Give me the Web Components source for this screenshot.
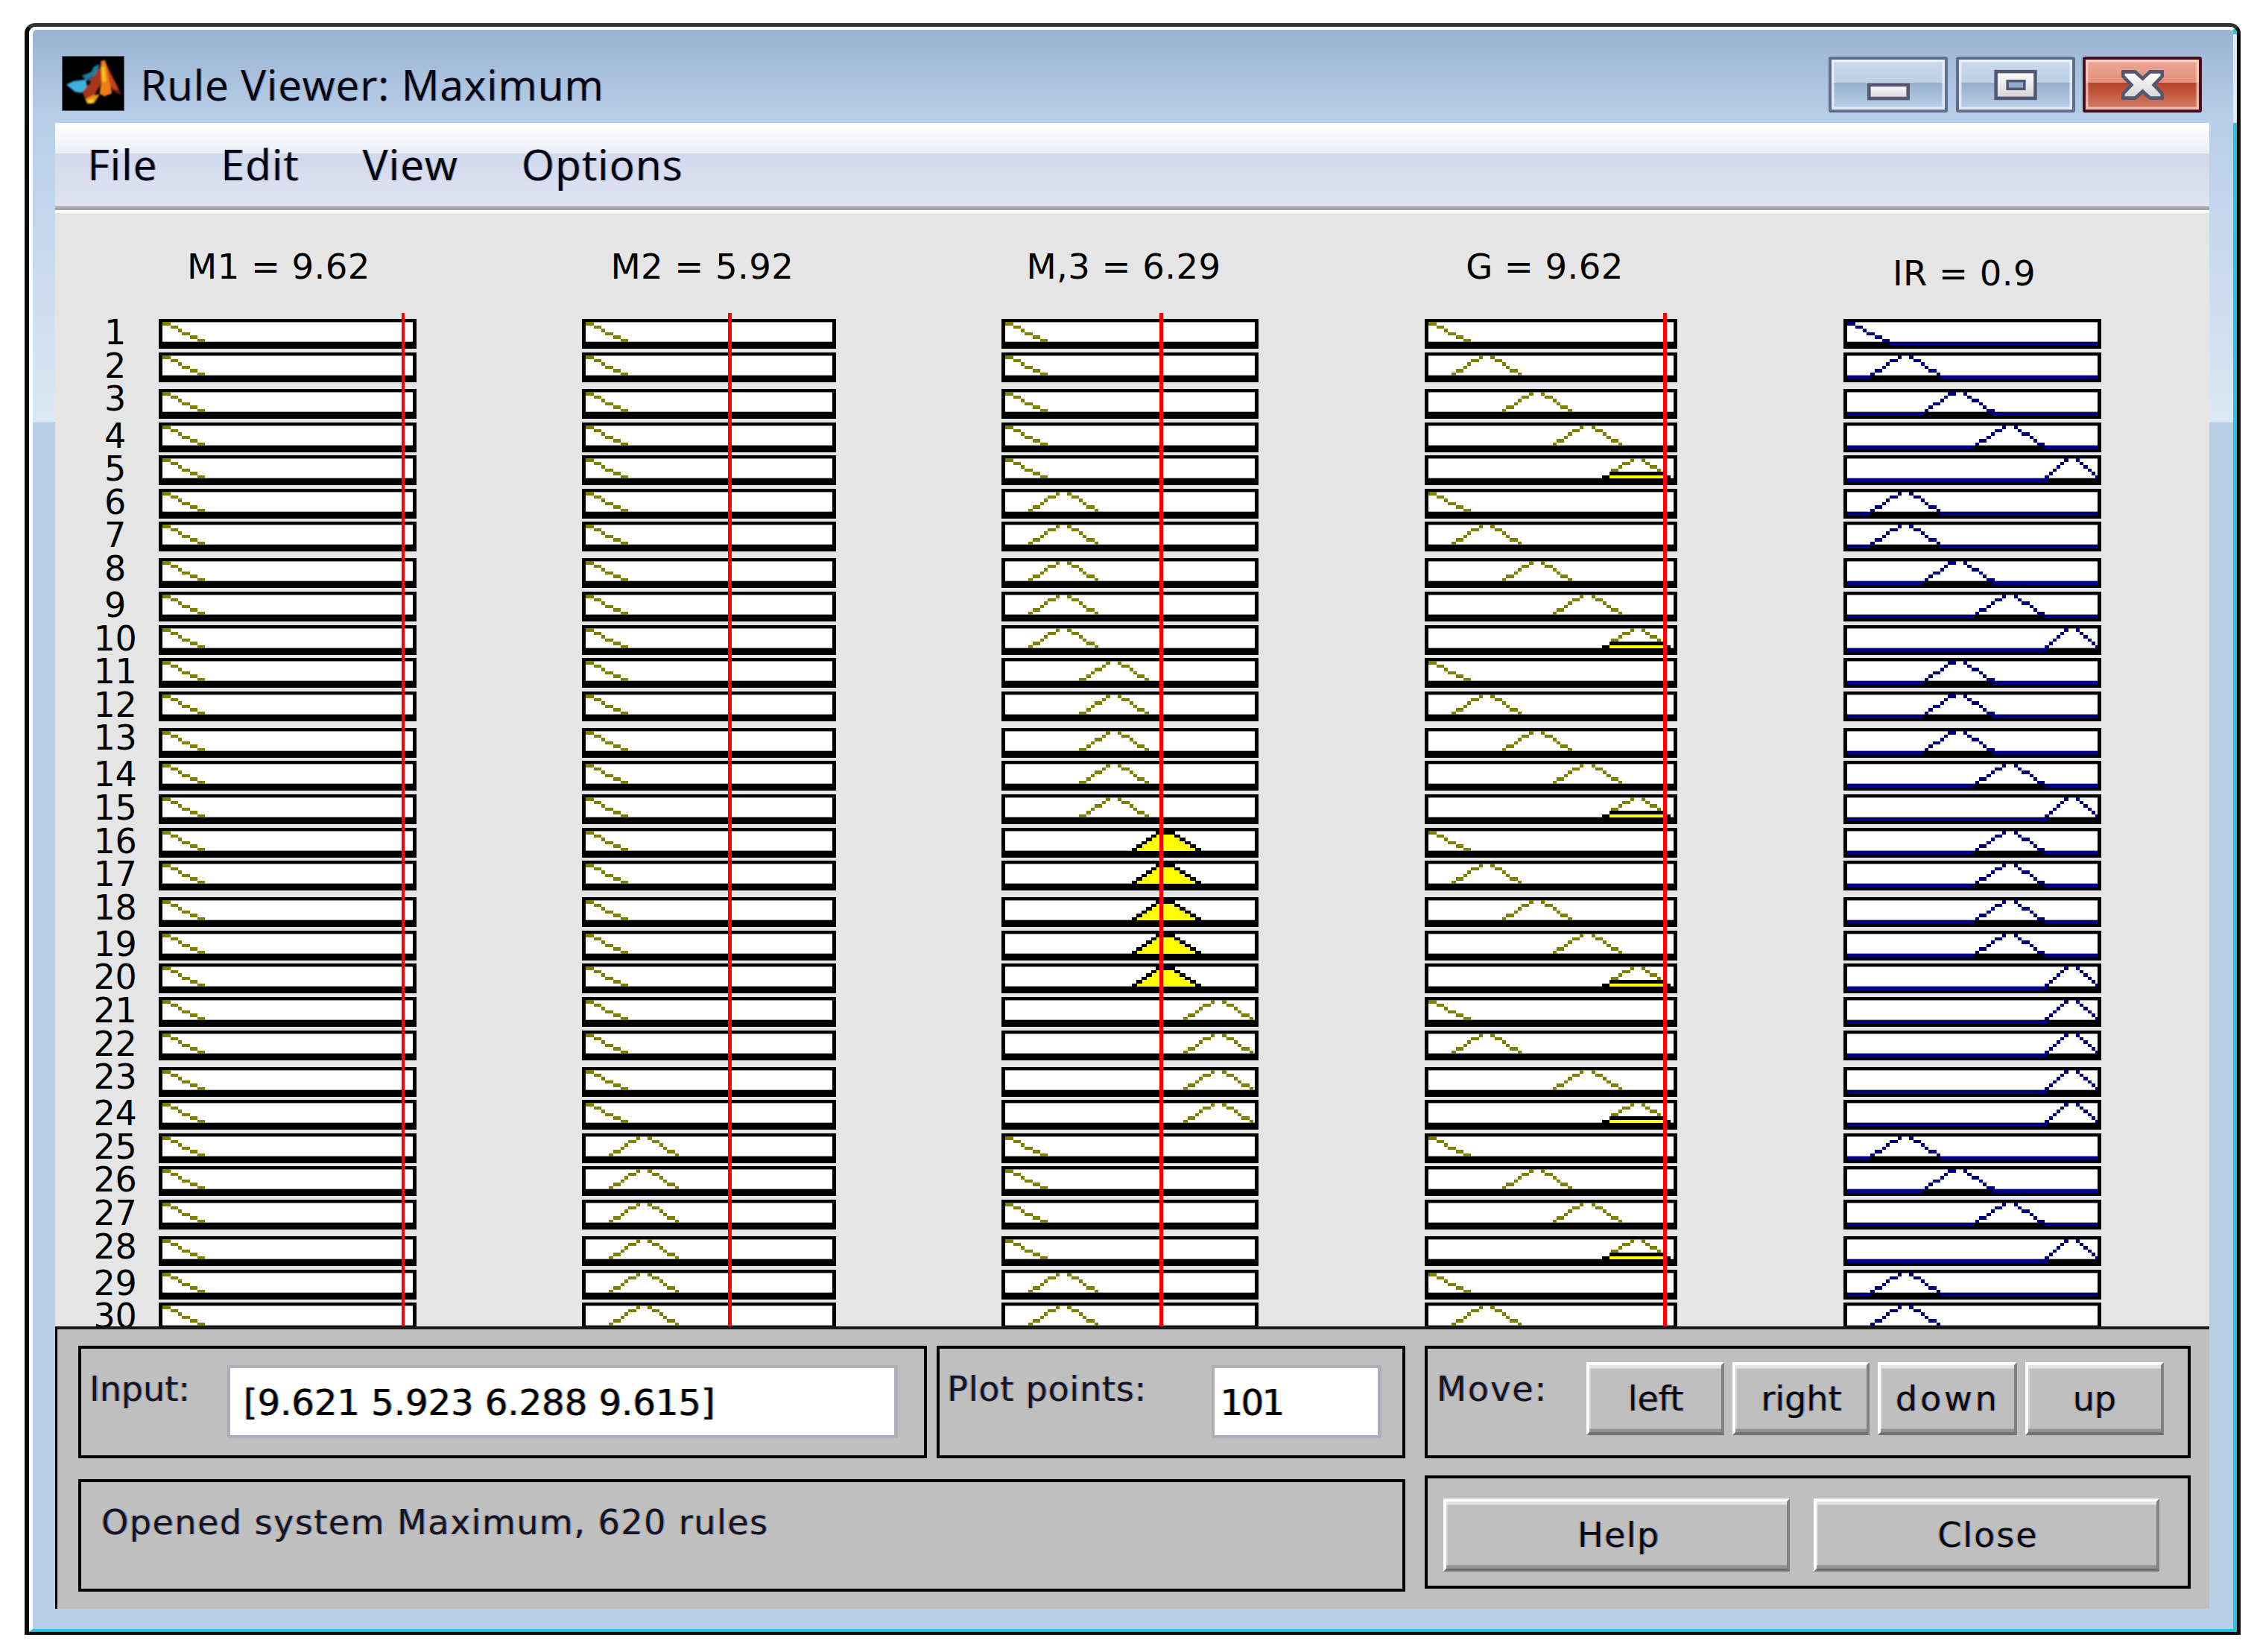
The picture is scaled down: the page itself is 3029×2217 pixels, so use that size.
<!DOCTYPE html>
<html lang="en">
<head>
<meta charset="utf-8">
<title>Rule Viewer: Maximum</title>
<style>
html,body{margin:0;padding:0;background:#fff;width:3029px;height:2217px;overflow:hidden}
body{font-family:"DejaVu Sans",sans-serif;color:#000}
</style>
</head>
<body>
<rv-window>
  <rv-titlebar slot="title" heading="Rule Viewer: Maximum"></rv-titlebar>
  <rv-menubar slot="menu"><span>File</span><span>Edit</span><span>View</span><span>Options</span></rv-menubar>
  <rv-plots slot="plots"></rv-plots>
  <rv-panel slot="panel">
    <rv-frame style="grid-column:1;grid-row:1" pad="22px 0 0 11.5px" gap="50px">
      <rv-label>Input:</rv-label>
      <rv-edit style="width:900.5px;padding-left:18px">[9.621 5.923 6.288 9.615]</rv-edit>
    </rv-frame>
    <rv-frame style="grid-column:3;grid-row:1" pad="22px 0 0 10.5px" gap="87.6px">
      <rv-label style="letter-spacing:.8px">Plot points:</rv-label>
      <rv-edit style="width:228px;padding-left:7px;letter-spacing:-2.5px">101</rv-edit>
    </rv-frame>
    <rv-frame style="grid-column:5;grid-row:1" pad="17.5px 0 0 12.5px" gap="52.5px">
      <rv-label style="margin-top:13.6px;letter-spacing:2px">Move:</rv-label>
      <div style="display:flex;gap:11px">
        <rv-button style="width:185px;height:98.7px">left</rv-button>
        <rv-button style="width:184px;height:98.7px">right</rv-button>
        <rv-button style="width:186.6px;height:98.7px;letter-spacing:4px">down</rv-button>
        <rv-button style="width:185.6px;height:98.7px">up</rv-button>
      </div>
    </rv-frame>
    <rv-frame style="grid-column:1 / 4;grid-row:2" pad="31px 0 0 27.5px">
      <rv-label flat style="letter-spacing:1.5px">Opened system Maximum, 620 rules</rv-label>
    </rv-frame>
    <rv-frame style="grid-column:5;grid-row:2;margin-top:-4.5px;height:151.7px" pad="26.5px 0 0 21px" gap="31.5px">
      <rv-button style="width:465.5px;height:98px;letter-spacing:1.5px;padding-left:6px">Help</rv-button>
      <rv-button style="width:464.5px;height:98px;letter-spacing:2px;padding-left:4px">Close</rv-button>
    </rv-frame>
  </rv-panel>
</rv-window>
<script>
const FRINGE='-1.3px 0 rgba(225,135,20,.6),1.3px 0 rgba(10,110,225,.6)';
function shadow(el,html){const r=el.attachShadow({mode:'open'});r.innerHTML=html;return r;}

class RvWindow extends HTMLElement{constructor(){super();shadow(this,`<style>
:host{display:block;box-sizing:border-box;margin:31px 22px 0 33px;height:2162.6px;filter:blur(.7px);
 border:solid #0a0a0a;border-width:5.4px 5px 4px 6.5px;border-top-color:#333;border-radius:14px 14px 0 0}
.inner{position:relative;box-sizing:border-box;height:100%;display:flex;flex-direction:column;padding:0 32px 27px 30px;
 border:solid #fff;border-width:4px 5px 4.5px 5px;border-right-color:#26c4e0;border-bottom-color:#26c4e0;border-radius:9px 9px 0 0;
 background:linear-gradient(#9ab3d1 0,#b8cfe9 125px,#dbe7f5 522px,#dbe7f5 526px,#b9cfe8 527px) padding-box}
.inner::after{content:"";position:absolute;top:6px;right:-5px;width:5px;height:119px;background:#dfeaf4}
::slotted(rv-plots){flex:1 1 0;min-height:0}
</style><div class="inner"><slot name="title"></slot><slot name="menu"></slot><slot name="plots"></slot><slot name="panel"></slot></div>`);}}

class MatlabLogo extends HTMLElement{constructor(){super();shadow(this,`<style>:host{display:block;width:82px;height:71.5px;background:#000;flex:none;outline:1px solid #4d5f78}svg{display:block;width:100%;height:100%}</style>
<svg viewBox="0 0 248 214" aria-hidden="true"><defs><filter id="b"><feGaussianBlur stdDeviation="3"/></filter></defs><g filter="url(#b)">
<polygon points="15,112 45,98 95,92 100,125 75,146 50,142" fill="#3fb1dc"/>
<polygon points="78,76 115,62 128,38 150,30 140,70 98,98" fill="#1e7d96"/>
<polygon points="98,92 132,72 140,76 122,104" fill="#45505e"/>
<polygon points="80,142 110,108 138,62 155,40 158,14 172,12 168,60 150,120 120,170 92,172" fill="#a8361a"/>
<polygon points="155,20 172,14 190,70 200,148 170,160 150,150 158,90" fill="#ee7d18"/>
<polygon points="156,40 172,40 176,100 160,100" fill="#fbc01f"/>
<polygon points="176,24 192,60 218,110 232,142 205,135 190,100" fill="#c93f16"/>
<polygon points="205,132 232,135 238,155 220,148" fill="#6a1f0a"/>
<polygon points="92,172 125,155 150,152 128,188 100,190" fill="#e8951b"/>
<polygon points="104,174 126,172 120,188 108,188" fill="#fde02c"/>
</g></svg>`);}}

class WinButton extends HTMLElement{constructor(){super();
 const k=this.getAttribute('kind');
 const close=k==='close';
 const glyph={min:'<rect x="50" y="33.5" width="52" height="18" fill="url(#g)" stroke="#535872" stroke-width="4.5"/>',
  max:'<rect x="49.3" y="15.7" width="52.5" height="35.6" fill="url(#g)" stroke="#535872" stroke-width="4.5"/><rect x="64.7" y="28.2" width="22.6" height="10.6" fill="#8eadd0" stroke="#535872" stroke-width="3.5"/>',
  close:'<polygon points="50,16 66,16 76,25 86,16 102,16 102,22 91,33.5 102,45 102,51 86,51 76,42 66,51 50,51 50,45 61,33.5 50,22" fill="url(#g)" stroke="#535872" stroke-width="4.5"/>'}[k];
 shadow(this,`<style>:host{display:block;box-sizing:border-box;flex:none;width:160px;height:75.4px;border-radius:3px;border:4.5px solid ${close?'#45101f':'#5f6f8d'};
 background:${close?'linear-gradient(#eda898 0,#e38f7b 46.7%,#b7452a 46.7%,#be5237 62%,#d67f6a 100%)':'linear-gradient(#c9d9ec 0,#bcd0e6 46.7%,#95afcb 46.7%,#a1b9d4 62%,#b8d0ea 100%)'};
 box-shadow:inset 0 0 0 3.5px ${close?'rgba(255,225,215,.65)':'rgba(240,246,252,.75)'}}
 svg{display:block;width:100%;height:100%}</style>
 <svg viewBox="0 0 151 66.4" aria-hidden="true"><defs><linearGradient id="g" x1="0" y1="0" x2="0" y2="1"><stop offset="0" stop-color="#fff"/><stop offset="1" stop-color="#d3d3d3"/></linearGradient></defs>${glyph}</svg>`);}}

class RvTitlebar extends HTMLElement{constructor(){super();shadow(this,`<style>
:host{display:flex;flex:none;box-sizing:border-box;height:125px;padding:36px 10px 0 10.4px;align-items:flex-start}
.t{font:56.5px/1 "Open Sans",sans-serif;letter-spacing:.95px;margin:10px 0 0 22px;color:#050518;text-shadow:${FRINGE};white-space:nowrap}
.b{margin-left:auto;display:flex;gap:10.5px}
</style><matlab-logo></matlab-logo><div class="t">${this.getAttribute('heading')}</div><div class="b"><win-button kind="min"></win-button><win-button kind="max"></win-button><win-button kind="close"></win-button></div>`);}}

class RvMenubar extends HTMLElement{constructor(){super();shadow(this,`<style>
:host{display:flex;flex:none;box-sizing:border-box;height:120.5px;padding:28px 0 0 43.4px;gap:85px;align-items:flex-start;
 font:56.5px/1 "Open Sans",sans-serif;letter-spacing:1.2px;color:#050518;text-shadow:${FRINGE};
 background:linear-gradient(#fff 0,#ebeef7 40.5px,#d2d9ec 41px,#dfe4f4 112px,#a4a4a4 112px,#a4a4a4 116.5px,#fff 116.5px)}
</style><slot></slot>`);}}

class FuzzyPlot extends HTMLElement{constructor(){super();
 const W=+this.getAttribute('w'),p=this.hasAttribute('peak')?+this.getAttribute('peak'):null;
 const ink=this.getAttribute('ink'),state=this.getAttribute('state')||'';
 const u=5.2,v=4.46,y0=4.4,snap=x=>Math.round(x/u)*u;
 let s='';
 const R=(a,b,y,h,f)=>{a=Math.max(a,5);b=Math.min(b,W-5);if(b>a)s+=`<rect x="${a.toFixed(2)}" y="${y.toFixed(2)}" width="${(b-a).toFixed(2)}" height="${h.toFixed(2)}" fill="${f}"/>`;};
 R(5,W-5,y0,26.7,'#fff');R(5,W-5,y0,1,'#999');R(5,W-5,30,1,'#aaa');
 const seg=(a,b,r,f)=>{let A=snap(a),B=snap(b);if(B<=A)B=A+u;R(A,B,y0+r*v,v,f);};
 const c=ink==='navy'?'#000080':'#808000';
 let fa=5,fb=62;
 if(p===null){for(let r=0;r<6;r++)seg(5+9.5*r,5+9.5*(r+1),r,c);}
 else{
  const sl=p>=300?5.2:6.95,il=p>=300?3:4,ir=p>=300?3:5.7;
  fa=p-il-6*sl;fb=p+ir+6*sl;
  if(state==='full'){
   for(let r=0;r<6;r++){const L=p-14-6.5*r,Q=p+12+6.9*r;R(L,Q,y0+r*v,v,'#000');if(r>0)R(L+7.5,Q-7.5,y0+r*v,v,'#ff0');}
  }else{
   const n=state==='band'?4:6;
   for(let r=0;r<n;r++){seg(p-il-sl*(r+1),p-il-sl*r,r,c);seg(p+ir+sl*r,p+ir+sl*(r+1),r,c);}
   if(state==='band'){R(p-36.5,p+38,y0+4*v,v,'#000');R(p-46,p+46,y0+5*v,v,'#000');R(p-36.5,p+38,y0+5*v,v,'#ff0');}
  }
 }
 if(ink==='navy'){R(5,W-5,31,4.5,'#000080');R(Math.max(fa,5),fb,31,4.5,'#000');}
 shadow(this,`<style>:host{display:block;width:${W}px;height:40px;background:#000}svg{display:block}</style>
 <svg width="${W}" height="40" viewBox="0 0 ${W} 40" shape-rendering="crispEdges" aria-hidden="true">${s}</svg>`);}}

class RvColumn extends HTMLElement{constructor(){super();shadow(this,`<style>
:host{display:block;position:relative;min-width:0}
.head{height:142.8px;box-sizing:border-box;text-align:center;font:46.6px/46.6px "DejaVu Sans",sans-serif;white-space:nowrap;letter-spacing:.4px}
.row{height:40px;margin-top:4.6px}
.row:nth-child(5n+3){margin-top:9.06px}
.row:first-child{margin-top:0}
.lab{font:46px/37px "DejaVu Sans",sans-serif;text-align:center;letter-spacing:-.5px}
.row.lab:nth-child(5n+3){margin-top:4.6px;height:44.46px}
.red{position:absolute;top:134.5px;bottom:0;width:4.6px;background:#ff0000}
</style><div class="head"></div><div class="rows"></div><div class="red" hidden></div>`);}
 connectedCallback(){
  const r=this.shadowRoot,rows=r.querySelector('.rows'),head=r.querySelector('.head');
  head.textContent=this.getAttribute('heading')||'';
  head.style.paddingTop=(this.getAttribute('headtop')||'49')+'px';
  head.style.paddingRight=(this.getAttribute('shift')||'0')+'px';
  const W=this.getAttribute('w'),ink=this.getAttribute('ink');
  const peaks=(this.getAttribute('peaks')||'').split(',');
  const seq=(this.getAttribute('seq')||'');
  const st=(this.getAttribute('states')||'').split(',').filter(Boolean);
  if(this.hasAttribute('red')){const e=r.querySelector('.red');e.hidden=false;e.style.left=this.getAttribute('red')+'px';}
  let html='';
  for(let i=0;i<30;i++){
   if(this.hasAttribute('labels')){html+=`<div class="row lab">${i+1}</div>`;continue;}
   const m=+seq[i];
   const pk=m===0?'':` peak="${peaks[m]}"`;
   let state='';
   st.forEach(t=>{const [a,b]=t.split(':');if(+a===i+1)state=` state="${b}"`;});
   html+=`<div class="row"><fuzzy-plot w="${W}" ink="${ink}"${pk}${state}></fuzzy-plot></div>`;
  }
  rows.innerHTML=html;
 }}

class RvPlots extends HTMLElement{constructor(){super();shadow(this,`<style>
:host{display:grid;overflow:hidden;background:#e5e5e5;
 grid-template-columns:139px 346px 222.4px 341px 221.6px 345px 223px 339px 223px 346px;align-content:start}
</style>
<rv-column labels style="grid-column:1;padding-left:40.4px;width:80px"></rv-column>
<rv-column style="grid-column:2" heading="M1 = 9.62" shift="24" w="346" ink="olive" red="325.6" seq="000000000000000000000000000000"></rv-column>
<rv-column style="grid-column:4" heading="M2 = 5.92" shift="19" w="341" ink="olive" red="196" peaks="0,82" seq="000000000000000000000000111111"></rv-column>
<rv-column style="grid-column:6" heading="M,3 = 6.29" shift="17" w="345" ink="olive" red="212" peaks="0,82,151,221,290" seq="000001111122222333334444000011"
 states="16:full,17:full,18:full,19:full,20:full"></rv-column>
<rv-column style="grid-column:8" heading="G = 9.62" shift="17" w="339" ink="olive" red="320" peaks="0,82,150,217,284" seq="012340123401234012340134023401"
 states="5:band,10:band,15:band,20:band,24:band,28:band"></rv-column>
<rv-column style="grid-column:10" heading="IR = 0.9" headtop="58" shift="22" w="346" ink="navy" peaks="0,82,153,222,307" seq="012341123422234333344444123411"></rv-column>`);}}

class RvPanel extends HTMLElement{constructor(){super();shadow(this,`<style>
:host{display:grid;flex:none;box-sizing:border-box;height:378.5px;background:#bfbfbf;
 border-top:4.5px solid #1c1c1c;border-left:3.8px solid #000;padding:22px 0 0 27.6px;
 grid-template-columns:1139px 13px 629px 26px 1028px;grid-template-rows:151.4px 151.2px;row-gap:27.1px;align-content:start}
</style><slot></slot>`);}}

class RvFrame extends HTMLElement{constructor(){super();shadow(this,`<style>
:host{display:flex;box-sizing:border-box;border:4.5px solid #000;align-items:flex-start;padding:${this.getAttribute('pad')||0};gap:${this.getAttribute('gap')||0}}
</style><slot></slot>`);}}

class RvLabel extends HTMLElement{constructor(){super();shadow(this,`<style>
:host{display:block;font:46px/46px "DejaVu Sans",sans-serif;color:#141428;white-space:nowrap;text-shadow:${FRINGE}}
:host(:not([flat])){margin-top:9px}
</style><slot></slot>`);}}

class RvEdit extends HTMLElement{constructor(){super();shadow(this,`<style>
:host{display:flex;box-sizing:border-box;height:98px;align-items:center;background:#fff;border:solid #aeaeb8;border-width:4.5px 5px 4px 4.5px;
 padding:2px 0 0 16px;flex:none;font:48px/1 "DejaVu Sans",sans-serif;color:#000;white-space:nowrap;text-shadow:${FRINGE}}
</style><slot></slot>`);}}

class RvButton extends HTMLElement{constructor(){super();shadow(this,`<style>
:host{display:flex;box-sizing:border-box;flex:none;align-items:center;justify-content:center;background:#bfbfbf;
 border:4.5px solid;border-color:#fff #808080 #707070 #fff;box-shadow:inset 0 4.5px #e3e3e3,inset 0 -4.5px #929292,inset 2px 0 #d0d0d0;
 font:46px/1 "DejaVu Sans",sans-serif;color:#0a0a14;text-shadow:${FRINGE};white-space:nowrap}
</style><slot></slot>`);}}

[['matlab-logo',MatlabLogo],['win-button',WinButton],['fuzzy-plot',FuzzyPlot],['rv-column',RvColumn],['rv-titlebar',RvTitlebar],['rv-menubar',RvMenubar],['rv-plots',RvPlots],['rv-panel',RvPanel],['rv-frame',RvFrame],['rv-label',RvLabel],['rv-edit',RvEdit],['rv-button',RvButton],['rv-window',RvWindow]].forEach(([n,c])=>customElements.define(n,c));
</script>
</body>
</html>
